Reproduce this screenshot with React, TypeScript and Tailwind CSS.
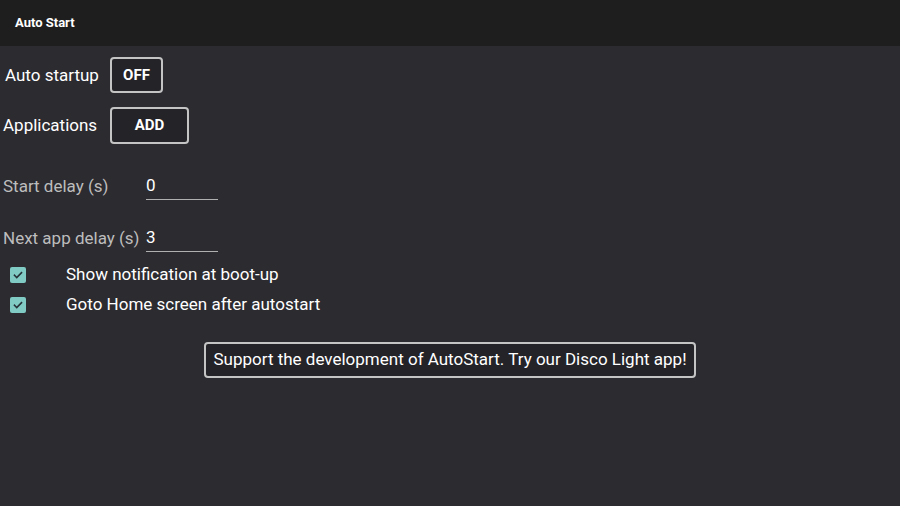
import React from "react";

function Check() {
  return (
    <span className="w-4 h-4 rounded-[2px] bg-[#80cbc4] flex items-center justify-center">
      <svg width="12" height="12" viewBox="0 0 24 24" fill="none" stroke="#263238" strokeWidth="3.2" strokeLinecap="square">
        <path d="M5 12.5l4.5 4.5L19 7.5" />
      </svg>
    </span>
  );
}

export default function App() {
  return (
    <div className="w-[900px] h-[506px] bg-[#2c2b30] text-white font-['Roboto',sans-serif] flex flex-col">
      <div className="h-[46px] bg-[#1e1e1e] flex items-center px-[15px] shrink-0">
        <span className="text-[13px] font-bold">Auto Start</span>
      </div>

      <div className="flex items-center h-[36px] mt-[11px]">
        <span className="pl-[5px] w-[110px] text-[17px] pt-[1px]">Auto startup</span>
        <button className="w-[53px] h-[36px] rounded-[4px] border-2 border-[#c4c4c4] bg-[#242327] text-[15px] font-bold">OFF</button>
      </div>

      <div className="flex items-center h-[37px] mt-[14px]">
        <span className="pl-[3px] w-[110px] text-[17px]">Applications</span>
        <button className="w-[79px] h-[37px] rounded-[4px] border-2 border-[#c4c4c4] bg-[#242327] text-[15px] font-bold">ADD</button>
      </div>

      <div className="flex items-end h-[30px] mt-[26px]">
        <span className="pl-[3px] w-[146px] text-[17px] text-[#bdbdbd] pb-[1px]">Start delay (s)</span>
        <span className="w-[72px] border-b border-[#b0b0b0] text-[17px] pb-[1px]">0</span>
      </div>

      <div className="flex items-end h-[30px] mt-[22px]">
        <span className="pl-[3px] w-[143px] text-[17px] text-[#bdbdbd] pb-[1px]">Next app delay (s)</span>
        <span className="ml-[3px] w-[72px] border-b border-[#b0b0b0] text-[17px] pb-[1px]">3</span>
      </div>

      <div className="flex items-center h-[16px] mt-[15px] pl-[10px]">
        <Check />
        <span className="ml-[40px] text-[17px]">Show notification at boot-up</span>
      </div>
      <div className="flex items-center h-[16px] mt-[14px] pl-[10px]">
        <Check />
        <span className="ml-[40px] text-[17px]">Goto Home screen after autostart</span>
      </div>

      <div className="flex justify-center mt-[29px]">
        <button className="w-[492px] h-[36px] rounded-[4px] border-2 border-[#c4c4c4] bg-[#242327] text-[17px]">
          Support the development of AutoStart. Try our Disco Light app!
        </button>
      </div>
    </div>
  );
}
